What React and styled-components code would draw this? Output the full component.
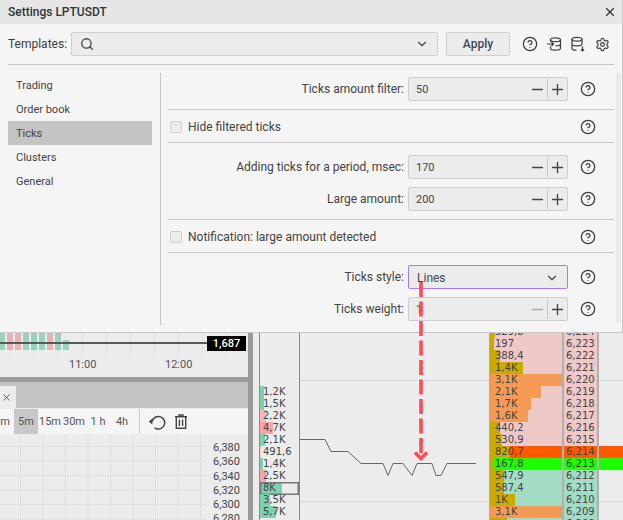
import React from 'react';
import styled, { createGlobalStyle } from 'styled-components';
import { Search, ChevronDown, X, CircleHelp, Settings, Minus, Plus } from 'lucide-react';

const Global = createGlobalStyle`
  html, body { margin: 0; padding: 0; background: #ececec; }
  * { box-sizing: border-box; }
  body { font-family: Roboto, "Liberation Sans", sans-serif; color: #3d3d3d; font-size: 12px; }
`;

const Page = styled.div`position: relative; width: 623px; height: 520px; overflow: hidden; background: #ececec; display: flex;`;
const LeftCol = styled.div`width: 248px; display: flex; flex-direction: column; padding-top: 333px; flex: none;`;
const ChartPanel = styled.div`height: 44px; position: relative; background: #ececec;`;
const ChartTicks = styled.div`position: absolute; left: 0; right: 0; top: 0; height: 22px; background-image: linear-gradient(90deg, #dcdcdc 1px, transparent 1px); background-size: 24px 22px; background-position: 10px 0;`;
const Splitter = styled.div`height: 5px; flex: none; background: #9a9a9a;`;
const TabBar = styled.div`height: 26px; flex: none; background: #c4c4c4; padding-top: 4px; display: flex;`;
const TabClose = styled.div`width: 16px; height: 22px; background: #ececec; display: flex; align-items: center; padding-left: 1px;`;
const Tools = styled.div`height: 25px; flex: none; margin-top: 1px; background: #f5f5f5; display: flex; align-items: stretch; font-size: 11px; color: #555;`;
const TF = styled.div`width: ${p => p.$w}px; flex: none; display: flex; align-items: center; justify-content: ${p => p.$end ? 'flex-end' : 'center'}; padding-right: ${p => p.$end ? '4px' : '0'}; background: ${p => p.$on ? '#c8c8c8' : 'transparent'};`;
const ToolSep = styled.div`width: 1px; background: #ccc; margin: 0 5px 0 5px;`;
const ToolIcon = styled.div`width: 24px; flex: none; display: flex; align-items: center; justify-content: center;`;
const PriceChart = styled.div`flex: 1; display: flex; background: #ececec; min-height: 0;`;
const Grid = styled.div`flex: 1; background-image: linear-gradient(#dedede 1px, transparent 1px), linear-gradient(90deg, #dedede 1px, transparent 1px); background-size: 22.5px 14.5px; background-position: 20px 12px;`;
const PriceAxis = styled.div`width: 42px; flex: none; padding: 7px 8px 0 0; text-align: right; font-size: 11px; line-height: 14.3px; color: #444;`;
const VBar = styled.div`width: 5px; background: #9a9a9a; flex: none;`;
const Mid = styled.div`width: 6px; flex: none;`;

const VolCol = styled.div`width: 41px; flex: none; border: solid #8a8a8a; border-width: 0 1px; padding-top: 386px; background: #ececec; display: flex; flex-direction: column;`;
const VolRow = styled.div`height: 12px; position: relative; font: 10px/12px "DejaVu Sans", sans-serif; padding-left: 3px; color: #444;`;
const SelBox = styled.span`position: absolute; left: 0; right: 0; top: 0; height: 13px; border: 1px solid #777; box-shadow: inset 0 0 0 0.5px #777;`;
const Fill = styled.span`position: absolute; left: 0; top: 0; bottom: 0; width: ${p => p.$w}px; background: ${p => p.$c};`;
const RowText = styled.span`position: relative;`;
const Ladder = styled.div`flex: 1; display: flex; position: relative; min-width: 0;`;
const Centre = styled.div`width: 189px; flex: none; position: relative;`;
const HLine = styled.div`position: absolute; left: 0; right: 0; top: ${p => p.$t}px; height: 1px; background: #d9d9d9;`;
const Trace = styled.svg`position: absolute; left: 0; top: 0;`;
const Book = styled.div`position: relative; flex: 1; display: flex; flex-direction: column; padding-top: 326px;`;
const BookRow = styled.div`height: 12px; flex: none; display: flex; background: ${p => p.$bg || 'transparent'}; font: 10px/12px "DejaVu Sans", sans-serif; color: #444;`;
const BookVol = styled.div`position: relative; width: 73px; flex: none; background: ${p => p.$bg}; border-left: 1px solid #aaa; padding-left: 5px; white-space: nowrap;`;
const BookPrice = styled.div`width: 37px; flex: none; border: solid #b0b0b0; border-width: 0 2px; padding-left: 2px; background: ${p => p.$bg};`;

const Modal = styled.div`position: absolute; left: 0; top: 0; width: 623px; height: 333px; background: #f5f5f5; border: solid #c8c8c8; border-width: 0 1px 1px 0; display: flex; flex-direction: column;`;
const TitleBar = styled.div`height: 24px; flex: none; background: #e6e6e6; display: flex; align-items: center; justify-content: space-between; padding: 0 5px 0 8px; font-size: 12px; font-weight: 500; color: #333;`;
const TplRow = styled.div`height: 41px; flex: none; margin: 0 8px 0 8px; border-bottom: 1px solid #c8c8c8; display: flex; align-items: center; font-size: 12px;`;
const TplLabel = styled.span`width: 63px; flex: none;`;
const Select = styled.div`height: 24px; width: ${p => p.$w}px; flex: none; background: #ececec; border: 1px solid ${p => p.$focus ? '#a67cf2' : '#cfcfcf'}; border-radius: 2px; display: flex; align-items: center; justify-content: space-between; padding: ${p => p.$focus ? '1px' : '0'} 8px 0; color: #444; font-size: 12px;`;
const ApplyBtn = styled.div`width: 64px; height: 24px; flex: none; margin-left: 8px; border: 1px solid #cfcfcf; border-radius: 2px; background: #ececec; display: flex; align-items: center; justify-content: center; font-weight: 500; font-size: 12px; color: #3b4a5a;`;
const TplIcons = styled.div`display: flex; align-items: center; margin-left: 8px;`;
const TplIcon = styled.span`width: 24px; display: flex; justify-content: center;`;
const Body = styled.div`flex: 1; display: flex; padding: 8px 0 7px 8px; min-height: 0;`;
const Nav = styled.div`width: 152px; flex: none; display: flex; flex-direction: column;`;
const NavItem = styled.div`width: 144px; height: 24px; flex: none; padding-left: 8px; display: flex; align-items: center; background: ${p => p.$on ? '#c4c4c4' : 'transparent'}; font-size: 11px; color: #444;`;
const Content = styled.div`flex: 1; border-left: 1px solid #c8c8c8; padding-left: 7px; display: flex; min-width: 0;`;
const SettingsList = styled.div`width: 446px; flex: none; display: flex; flex-direction: column;`;
const Scroll = styled.div`width: 5px; margin: 0 0 3px 2px; background: #e9e9e9;`;
const Section = styled.div`border-bottom: ${p => p.$last ? 'none' : '1px solid #c8c8c8'}; padding: ${p => p.$pad || '0'}; display: flex; flex-direction: column; gap: 8px;`;
const Field = styled.div`height: 24px; flex: none; padding-right: 13px; display: flex; align-items: center; justify-content: flex-end; font-size: 12px; color: #444;`;
const FieldLabel = styled.span`margin-right: 4px;`;
const Stepper = styled.div`width: 160px; height: 24px; flex: none; background: #ececec; border: 1px solid #cfcfcf; border-radius: 2px; display: flex; align-items: center; font-size: 11px; color: #444;`;
const StepValue = styled.span`flex: 1; padding-left: 7px;`;
const StepBtn = styled.span`width: 20px; height: 20px; flex: none; display: flex; align-items: center; justify-content: center; ${p => p.$div ? 'border-left: 1px solid #c8c8c8;' : ''}`;
const HelpCell = styled.span`width: 27px; flex: none; margin-left: 6px; display: flex; justify-content: center;`;
const CheckRow = styled.div`height: 32px; padding: 1px 13px 0 0; display: flex; align-items: center; font-size: 12px; color: #444;`;
const Box = styled.span`width: 12px; height: 12px; flex: none; margin: 0 6px 0 2px; border: 1px solid #cfcfcf; border-radius: 2px; background: #ececec;`;
const Grow = styled.span`flex: 1;`;
const Arrow = styled.svg`position: absolute; left: 409px; top: 281px;`;
const Black = styled.div`position: absolute; right: 2px; top: 3px; width: 39px; height: 15px; background: #000; color: #fff; font-size: 11px; font-weight: 500; display: flex; align-items: center; justify-content: center;`;
const Candles = styled.div`position: absolute; left: -1px; top: 0; height: 17px; display: flex; align-items: flex-end; gap: 2px;`;
const Candle = styled.span`width: 6px; height: ${p => p.$h || 17}px; background: ${p => p.$c};`;
const ChartLine = styled.div`position: absolute; left: 0; right: 2px; top: 9px; height: 2px; background: #5a5a5a;`;
const TimeLabel = styled.span`position: absolute; left: ${p => p.$l}px; top: 25px; line-height: 14px; font-size: 11px; color: #556;`;

const Help = ({ size = 16 }) => <CircleHelp size={size} strokeWidth={1.9} color="#3d3d3d" />;
const DbIn = () => (<svg width="16" height="16" viewBox="0 0 16 16" fill="none" stroke="#3d3d3d" strokeWidth="1.2"><ellipse cx="9.5" cy="3.8" rx="5" ry="1.9" /><path d="M4.5 3.8v2M14.5 3.8v8.4c0 1.1-2.2 1.9-5 1.9s-5-.8-5-1.9v-2M14.5 8c0 1.1-2.2 1.9-5 1.9M1 8h6.5M5.5 6l2 2-2 2" /></svg>);
const DbDown = () => (<svg width="16" height="16" viewBox="0 0 16 16" fill="none" stroke="#3d3d3d" strokeWidth="1.2"><ellipse cx="7" cy="3.3" rx="5" ry="1.9" /><path d="M2 3.3v9.2c0 1 2 1.7 4.5 1.7M12 3.3V8M2 8c0 1 2.2 1.8 5 1.8s5-.8 5-1.8M12.5 10.5V15M11 13.5l1.5 1.5 1.5-1.5" /></svg>);
const Undo = () => (<svg width="18" height="18" viewBox="0 0 18 18" fill="none" stroke="#444" strokeWidth="1.5"><path d="M4.2 8.5A6.3 6.3 0 1 1 6.6 14.8" /><path d="M0.8 8.6l3.6-3v5.8z" fill="#444" stroke="none" /></svg>);
const Trash = () => (<svg width="14" height="16" viewBox="0 0 14 16" fill="none" stroke="#444" strokeWidth="1.4"><path d="M1 2.7h12M5 2.5V1h4v1.5M2.3 3v11.3h9.4V3M5.4 5.5v6.5M8.6 5.5v6.5" /></svg>);

const F = ({ label, value, dim }) => (
  <Field><FieldLabel>{label}</FieldLabel><Stepper><StepValue>{value}</StepValue><StepBtn><Minus size={17} strokeWidth={1.9} color={dim ? '#aaa' : '#444'} /></StepBtn><StepBtn $div><Plus size={17} strokeWidth={1.9} color="#444" /></StepBtn></Stepper><HelpCell><Help /></HelpCell></Field>
);

const vols = [['1,2K', 4, '#7dd0b0'], ['1,5K', 4, '#7dd0b0'], ['2,2K', 6, '#f6b9b9'], ['4,7K', 13, '#f6a5a5'], ['2,1K', 5, '#7dd0b0'], ['491,6', 1, '#f3c9c9'], ['1,4K', 3, '#7dd0b0'], ['2,5K', 6, '#f6a5a5'], ['8K', 22, '#7dd0b0', true], ['3,5K', 10, '#7dd0b0'], ['5,7K', 16, '#7dd0b0']];
const asks = [['329,8', '6,224', 5], ['197', '6,223', 4], ['388,4', '6,222', 10], ['1,4K', '6,221', 33], ['3,1K', '6,220', 72, 1], ['2,1K', '6,219', 51, 1], ['1,7K', '6,218', 41, 1], ['1,6K', '6,217', 38, 1], ['440,2', '6,216', 10], ['530,9', '6,215', 12]];
const bids = [['547,9', '6,212', 14], ['587,4', '6,211', 14], ['1K', '6,210', 25], ['3,1K', '6,209', 72, 1], ['', '6,208', 17]];
const G = '#97d4bb';
const R = '#e3b5b5';
const bars = [[G], [R], [R], [G], [G], [G], [R], [G], [G, 10]];

export default function App() {
  return (
    <Page>
      <Global />
      <LeftCol>
        <ChartPanel>
          <ChartTicks />
          <Candles>{bars.map(([c, h], i) => <Candle key={i} $c={c} $h={h} />)}</Candles>
          <ChartLine />
          <Black>1,687</Black>
          <TimeLabel $l={69}>11:00</TimeLabel>
          <TimeLabel $l={165}>12:00</TimeLabel>
        </ChartPanel>
        <Splitter />
        <TabBar><TabClose><X size={11} strokeWidth={1.8} /></TabClose></TabBar>
        <Tools>
          <TF $w={14} $end>m</TF><TF $w={24} $on>5m</TF><TF $w={24}>15m</TF><TF $w={24}>30m</TF><TF $w={24}>1 h</TF><TF $w={24}>4h</TF>
          <ToolSep /><ToolIcon><Undo /></ToolIcon><ToolIcon><Trash /></ToolIcon>
        </Tools>
        <PriceChart>
          <Grid />
          <PriceAxis>6,380<br />6,360<br />6,340<br />6,320<br />6,300<br />6,280</PriceAxis>
        </PriceChart>
      </LeftCol>
      <VBar />
      <Mid />
      <VolCol>
        {vols.map(([t, w, c, s]) => <VolRow key={t}><Fill $w={w} $c={c} />{s && <SelBox />}<RowText>{t}</RowText></VolRow>)}
      </VolCol>
      <Ladder>
        <HLine $t={380} />
        <HLine $t={501} />
        <Centre>
          <Trace width="189" height="520"><polyline fill="none" stroke="#666" strokeWidth="1" points="0,439.5 25,439.5 31,451.5 48,451.5 61,463.5 83,463.5 88,475.5 93,463.5 103,463.5 112,475.5 117,463.5 132,463.5 136,475.5 141,475.5 147,463.5 176,463.5" /></Trace>
        </Centre>
        <Book>
          {asks.map(([v, p, w, o]) => <BookRow key={p}><BookVol $bg="#efc8c8"><Fill $w={w} $c={o ? '#f59a55' : '#c8aa00'} /><RowText>{v}</RowText></BookVol><BookPrice $bg="#efc8c8">{p}</BookPrice></BookRow>)}
          <BookRow $bg="#ff5a00"><BookVol $bg="#ff5a00"><Fill $w={20} $c="#c8aa00" /><RowText>820,7</RowText></BookVol><BookPrice $bg="#ff5a00">6,214</BookPrice></BookRow>
          <BookRow $bg="#1bff00"><BookVol $bg="#1bff00"><Fill $w={4} $c="#c8aa00" /><RowText>167,8</RowText></BookVol><BookPrice $bg="#1bff00">6,213</BookPrice></BookRow>
          {bids.map(([v, p, w, o]) => <BookRow key={p}><BookVol $bg="#a3dcc4"><Fill $w={w} $c={o ? '#f59a55' : '#c8aa00'} /><RowText>{v}</RowText></BookVol><BookPrice $bg="#a3dcc4">{p}</BookPrice></BookRow>)}
        </Book>
      </Ladder>
      <Modal>
        <TitleBar>Settings LPTUSDT<X size={14} color="#333" /></TitleBar>
        <TplRow>
          <TplLabel>Templates:</TplLabel>
          <Select $w={367}><Search size={14} strokeWidth={2.2} color="#444" /><ChevronDown size={14} color="#444" /></Select>
          <ApplyBtn>Apply</ApplyBtn>
          <TplIcons>
            <TplIcon><Help /></TplIcon><TplIcon><DbIn /></TplIcon><TplIcon><DbDown /></TplIcon><TplIcon><Settings size={15} strokeWidth={1.9} color="#3d3d3d" /></TplIcon>
          </TplIcons>
        </TplRow>
        <Body>
          <Nav>
            <NavItem>Trading</NavItem><NavItem>Order book</NavItem><NavItem $on>Ticks</NavItem><NavItem>Clusters</NavItem><NavItem>General</NavItem>
          </Nav>
          <Content>
            <SettingsList>
              <Section $pad="4px 0 8px"><F label="Ticks amount filter:" value="50" /></Section>
              <Section><CheckRow><Box />Hide filtered ticks<Grow /><HelpCell><Help /></HelpCell></CheckRow></Section>
              <Section $pad="12px 0 8px"><F label="Adding ticks for a period, msec:" value="170" /><F label="Large amount:" value="200" /></Section>
              <Section><CheckRow><Box />Notification: large amount detected<Grow /><HelpCell><Help /></HelpCell></CheckRow></Section>
              <Section $pad="12px 0 0" $last>
                <Field><FieldLabel>Ticks style:</FieldLabel><Select $w={160} $focus>Lines<ChevronDown size={14} color="#444" /></Select><HelpCell><Help /></HelpCell></Field>
                <F label="Ticks weight:" value="1" dim />
              </Section>
            </SettingsList>
            <Scroll />
          </Content>
        </Body>
      </Modal>
      <Arrow width="24" height="182"><path d="M12 1V176" stroke="#ff4b57" strokeWidth="3.6" strokeDasharray="15 4.5" fill="none" /><path d="M6 171.5l6 6 6-6" stroke="#ff4b57" strokeWidth="3.6" fill="none" /></Arrow>
    </Page>
  );
}
